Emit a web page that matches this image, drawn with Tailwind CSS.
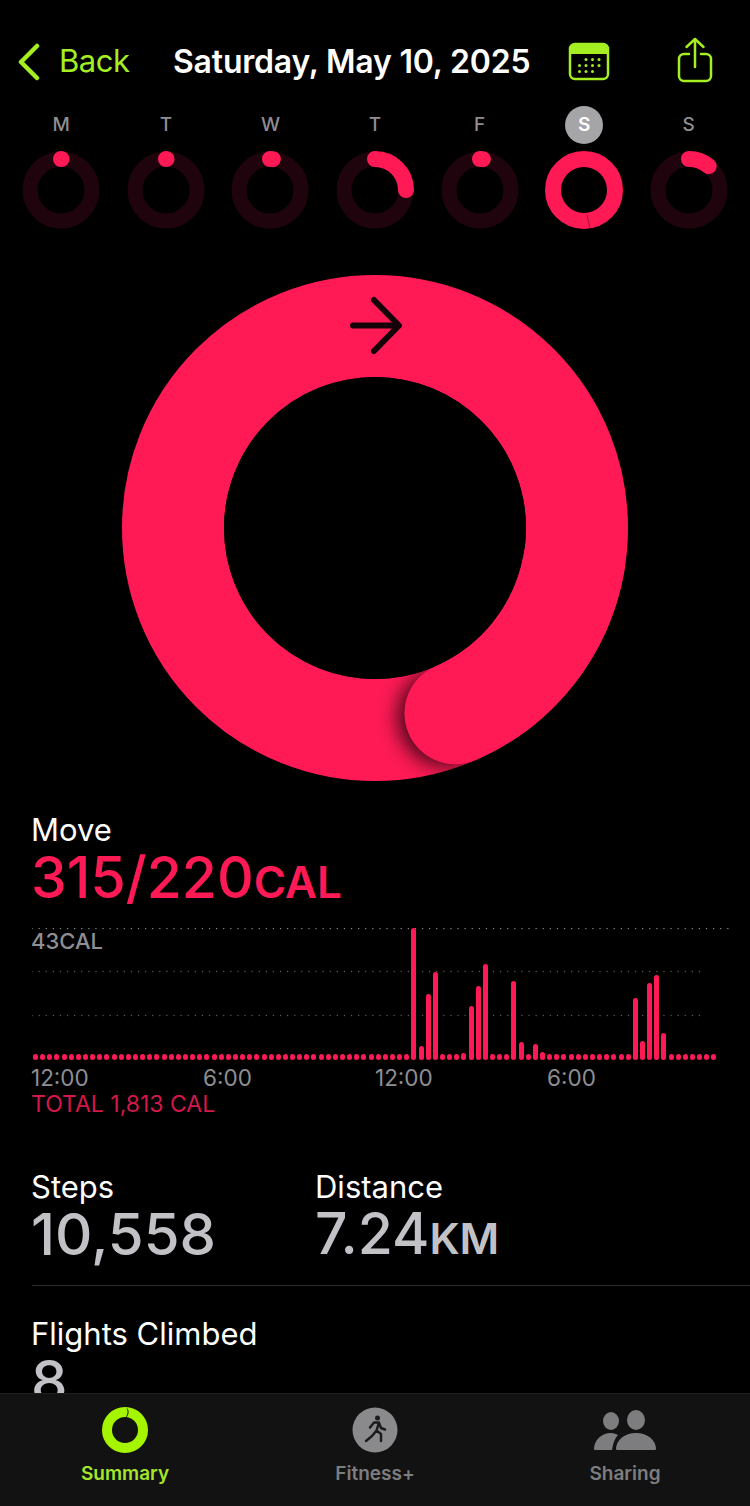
<!DOCTYPE html>
<html lang="en">
<head>
    <meta charset="UTF-8">
    <meta name="viewport" content="width=device-width, initial-scale=1.0">
    <title>Activity</title>
    <script src="https://cdn.jsdelivr.net/npm/@tailwindcss/browser@4"></script>
</head>
<body class="bg-black text-white font-['Inter',sans-serif] flex flex-col h-[1506px] w-[750px] overflow-hidden">

    <main class="flex-1 overflow-hidden">
        <!-- top bar -->
        <header class="flex items-center h-[47px] mt-[38px]">
            <div class="flex items-center w-[173px] pl-[18px] text-[#a4ee22]">
                <svg width="22" height="38" viewBox="0 0 22 38" fill="none" stroke="#a4ee22" stroke-width="4.5" stroke-linecap="round" stroke-linejoin="round"><path d="M19 3 3 19l16 16"/></svg>
                <span class="ml-[19px] text-[31px] tracking-[-0.5px]">Back</span>
            </div>
            <h1 class="w-[395px] text-[32px] font-semibold tracking-[-0.2px] whitespace-nowrap">Saturday, May 10, 2025</h1>
            <svg width="42" height="40" viewBox="0 0 42 40" fill="none">
                <rect x="2" y="2" width="38" height="35" rx="5" stroke="#a4ee22" stroke-width="2.5"/>
                <path d="M2 12V7a5 5 0 0 1 5-5h28a5 5 0 0 1 5 5v5z" fill="#a4ee22"/>
                <g fill="#a4ee22">
                    <circle cx="18" cy="17.500" r="1.500"/><circle cx="24.500" cy="17.500" r="1.500"/><circle cx="31" cy="17.500" r="1.500"/>
                    <circle cx="11.500" cy="23.500" r="1.500"/><circle cx="18" cy="23.500" r="1.500"/><circle cx="24.500" cy="23.500" r="1.500"/><circle cx="31" cy="23.500" r="1.500"/>
                    <circle cx="11.500" cy="29.500" r="1.500"/><circle cx="18" cy="29.500" r="1.500"/><circle cx="24.500" cy="29.500" r="1.500"/>
                </g>
            </svg>
            <svg class="ml-[67px] -mt-[4px]" width="38" height="46" viewBox="0 0 38 46" fill="none" stroke="#a4ee22" stroke-width="2.5" stroke-linecap="round" stroke-linejoin="round">
                <path d="M12 17H7a5 5 0 0 0-5 5v17a5 5 0 0 0 5 5h22a5 5 0 0 0 5-5V22a5 5 0 0 0-5-5h-5"/>
                <path d="M18 30V2M9.500 10 18 2l8.500 8"/>
            </svg>
        </header>

        <!-- week -->
        <div class="grid grid-cols-7 px-[9px] mt-[21px] text-[19px] text-[#8e8e93] font-medium text-center">
            <div class="h-[38px] leading-[38px]">M</div>
            <div class="h-[38px] leading-[38px]">T</div>
            <div class="h-[38px] leading-[38px]">W</div>
            <div class="h-[38px] leading-[38px]">T</div>
            <div class="h-[38px] leading-[38px]">F</div>
            <div class="flex justify-center"><span class="w-[38px] h-[38px] leading-[38px] rounded-full bg-[#a5a5a7] text-white font-semibold">S</span></div>
            <div class="h-[38px] leading-[38px]">S</div>
        </div>
        <div class="grid grid-cols-7 px-[9px] mt-[6px] justify-items-center">
            <svg width="80" height="80" viewBox="-40 -40 80 80" fill="none"><circle r="31" stroke="#1f040d" stroke-width="15"/><circle r="31" transform="rotate(-90)" pathLength="100" stroke="#ff1a55" stroke-width="16" stroke-linecap="round" stroke-dasharray="0.3 100"/></svg>
            <svg width="80" height="80" viewBox="-40 -40 80 80" fill="none"><circle r="31" stroke="#1f040d" stroke-width="15"/><circle r="31" transform="rotate(-90)" pathLength="100" stroke="#ff1a55" stroke-width="16" stroke-linecap="round" stroke-dasharray="0.3 100"/></svg>
            <svg width="80" height="80" viewBox="-40 -40 80 80" fill="none"><circle r="31" stroke="#1f040d" stroke-width="15"/><circle r="31" transform="rotate(-90)" pathLength="100" stroke="#ff1a55" stroke-width="16" stroke-linecap="round" stroke-dasharray="1.500 100"/></svg>
            <svg width="80" height="80" viewBox="-40 -40 80 80" fill="none"><circle r="31" stroke="#1f040d" stroke-width="15"/><circle r="31" transform="rotate(-90)" pathLength="100" stroke="#ff1a55" stroke-width="16" stroke-linecap="round" stroke-dasharray="25 100"/></svg>
            <svg width="80" height="80" viewBox="-40 -40 80 80" fill="none"><circle r="31" stroke="#1f040d" stroke-width="15"/><circle r="31" transform="rotate(-90)" pathLength="100" stroke="#ff1a55" stroke-width="16" stroke-linecap="round" stroke-dasharray="1.500 100"/></svg>
            <svg width="80" height="80" viewBox="-40 -40 80 80" fill="none"><circle r="31" stroke="#ff1a55" stroke-width="16"/><path d="M3 24.500 6 38" stroke="#a5103a" stroke-width="1"/></svg>
            <svg width="80" height="80" viewBox="-40 -40 80 80" fill="none"><circle r="31" stroke="#1f040d" stroke-width="15"/><circle r="31" transform="rotate(-90)" pathLength="100" stroke="#ff1a55" stroke-width="16" stroke-linecap="round" stroke-dasharray="11 100"/></svg>
        </div>

        <!-- big ring -->
        <svg class="block mt-[38px]" width="750" height="520" viewBox="0 0 750 520" fill="none">
            <defs><filter id="blur" x="-50%" y="-50%" width="200%" height="200%"><feGaussianBlur stdDeviation="10"/></filter></defs>
            <circle cx="375" cy="260" r="202" stroke="#ff1a55" stroke-width="102"/>
            <circle cx="447" cy="449" r="49" fill="#000" fill-opacity="0.75" filter="url(#blur)"/>
            <circle cx="375" cy="260" r="151" fill="#000"/>
            <path d="M573.900 295.100A202 202 0 0 1 455.500 445.300" stroke="#ff1a55" stroke-width="102" stroke-linecap="round"/>
            <path d="M353 57.500h45M374 32l25 25.500L374 83" stroke="#14040a" stroke-width="6" stroke-linecap="round" stroke-linejoin="round"/>
        </svg>

        <!-- move -->
        <section class="pl-[31px]">
            <div class="mt-[24px] h-[36px] leading-[36px] text-[31px]">Move</div>
            <div class="h-[60px] leading-[60px] text-[57px] font-medium text-[#ff1a55] whitespace-nowrap">315/220<span class="text-[44px] font-semibold">CAL</span></div>
        </section>

        <div class="relative h-[132px] mt-[20px] ml-[32px] w-[687px]">
            <svg class="absolute left-0 top-0" width="700" height="100" fill="none" stroke-linecap="round" stroke-dasharray="0.1 7">
                <path d="M0 0.500H696" stroke="#8a8a8a" stroke-width="1.300"/>
                <path d="M0 43.500H673" stroke="#5a5a5a" stroke-width="1.300"/>
                <path d="M0 87.500H673" stroke="#5a5a5a" stroke-width="1.300"/>
            </svg>
            <span class="absolute -left-[1px] -top-[3px] text-[22px] font-medium text-[#8e8e93]">43CAL</span>
            <div id="bars" class="absolute inset-0 left-[1px] flex items-end gap-[2.150px]"></div>
        </div>

        <div class="grid grid-cols-[172px_172px_172px_172px] pl-[31px] mt-[6px] h-[24px] leading-[24px] text-[22.500px] text-[#8e8e93]">
            <span>12:00</span><span>6:00</span><span>12:00</span><span>6:00</span>
        </div>
        <div class="pl-[31px] mt-[2px] h-[24px] leading-[24px] text-[23px] text-[#d3184b]">TOTAL 1,813 CAL</div>

        <!-- steps, distance -->
        <section class="flex mt-[53px] pl-[31px]">
            <div class="w-[284px]">
                <div class="h-[36px] leading-[36px] text-[31px]">Steps</div>
                <div class="h-[60px] leading-[58px] text-[58px] font-medium text-[#c2c2c6]">10,558</div>
            </div>
            <div>
                <div class="h-[36px] leading-[36px] text-[31px]">Distance</div>
                <div class="h-[60px] leading-[58px] text-[57px] font-medium text-[#c2c2c6]">7.24<span class="text-[43px] font-semibold">KM</span></div>
            </div>
        </section>
        <div class="h-px bg-[#2a2a2c] ml-[32px] mt-[20px]"></div>
        <section class="pl-[31px] mt-[30px]">
            <div class="h-[36px] leading-[36px] text-[31px]">Flights Climbed</div>
            <div class="h-[60px] leading-[58px] text-[58px] font-medium text-[#c2c2c6]">8</div>
        </section>
    </main>

    <!-- tab bar -->
    <footer class="h-[113px] shrink-0 bg-[#121212] border-t border-[#1f1f1f] grid grid-cols-3 text-[19px] font-semibold text-[#7d7d80] text-center">
        <div class="flex flex-col items-center pt-[13px]">
            <svg width="46" height="46" viewBox="0 0 46 46" fill="none"><circle cx="23" cy="23" r="18" stroke="#a6f500" stroke-width="10"/><path d="M25 1.500c2 3 1 6-1 9" stroke="#121212" stroke-width="1"/></svg>
            <span class="mt-[9px] leading-[24px] text-[#a4e62a]">Summary</span>
        </div>
        <div class="flex flex-col items-center pt-[13px]">
            <svg width="46" height="46" viewBox="0 0 46 46" fill="none">
                <circle cx="23" cy="23" r="22.500" fill="#8a8a8c"/>
                <circle cx="25.500" cy="11" r="2.500" fill="#1c1c1c"/>
                <path d="M18 20.500 22 15.500h5l-2.500 8 4.500 3.500v7M24.500 23.500 20 29l-6 5M27 16l2 5 4 1.500" stroke="#1c1c1c" stroke-width="2.500" stroke-linecap="round" stroke-linejoin="round"/>
            </svg>
            <span class="mt-[9px] leading-[24px]">Fitness+</span>
        </div>
        <div class="flex flex-col items-center pt-[13px]">
            <svg width="62" height="46" viewBox="0 0 62 46" fill="#7d7d80">
                <ellipse cx="17" cy="14" rx="8" ry="9"/>
                <ellipse cx="42" cy="13" rx="9" ry="10"/>
                <path d="M1 43c-1 0-1-1-1-2 1-8 7-15 17-15 3 0 5 1 7 2-3 3-5 8-6 15z"/>
                <path d="M23 43c-1 0-1-1-1-2 1-8 8-15 20-15s19 7 20 15c0 1 0 2-1 2z"/>
            </svg>
            <span class="mt-[9px] leading-[24px]">Sharing</span>
        </div>
    </footer>

    <script>
        // 96 quarter-hour bars, heights in px, anything unlisted is a dot
        const heights = {53: 132, 54: 14, 55: 66, 56: 88, 60: 7, 61: 54, 62: 74, 63: 96, 67: 79, 68: 18, 70: 16, 71: 8, 84: 62, 85: 19, 86: 77, 87: 85, 88: 27};
        const bars = document.getElementById('bars');
        for (let i = 0; i < 96; i++) {
            const bar = document.createElement('div');
            bar.className = 'w-[5px] shrink-0 rounded-full bg-[#ff1a55]';
            bar.style.height = (heights[i] || 6) + 'px';
            bars.appendChild(bar);
        }
    </script>
</body>
</html>
